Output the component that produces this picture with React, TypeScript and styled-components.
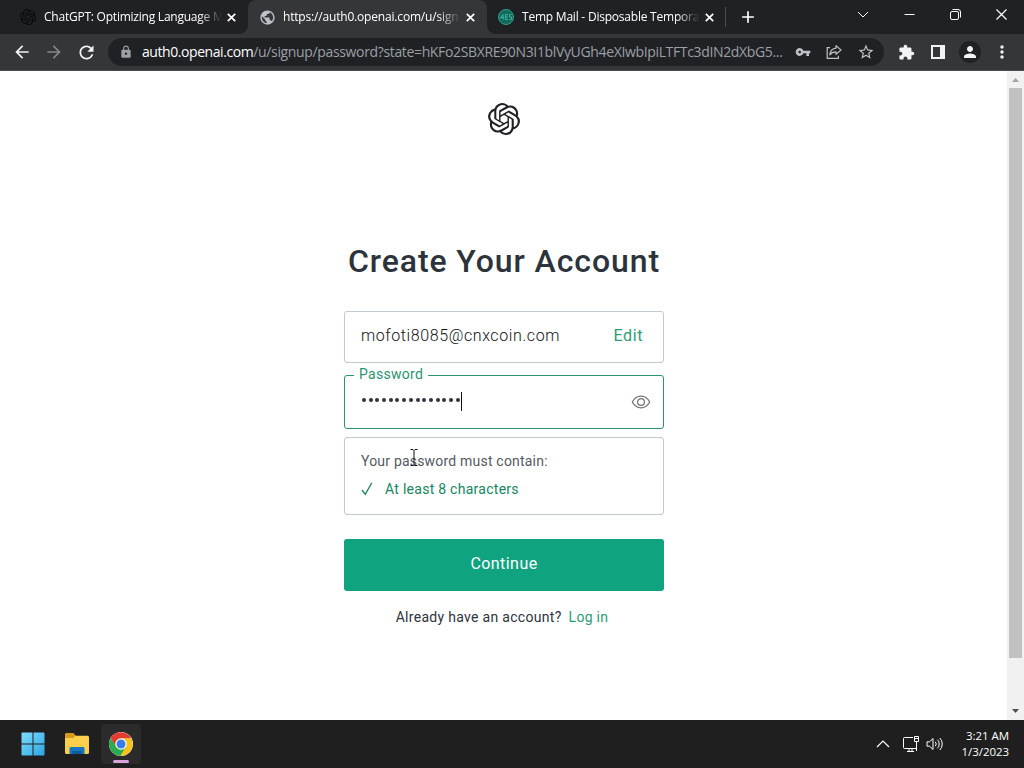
import type { ReactNode } from "react";
import { styled, createGlobalStyle, css } from "styled-components";
import { SiOpenai } from "react-icons/si";
import {
  MdAdd,
  MdArrowBack,
  MdArrowForward,
  MdExtension,
  MdLock,
  MdMoreVert,
  MdPerson,
  MdPublic,
  MdRefresh,
  MdStarBorder,
  MdVpnKey,
} from "react-icons/md";

const GlobalStyle = createGlobalStyle`
  * { box-sizing: border-box; }
  body { margin: 0; overflow: hidden; }
  svg { display: block; flex: none; }
`;

const Screen = styled.div`
  width: 1024px;
  height: 768px;
  display: flex;
  flex-direction: column;
  overflow: hidden;
  background: #fff;
  font-family: "Open Sans", "Noto Sans", sans-serif;
`;

/* browser */
const TabStrip = styled.header`
  height: 34px;
  padding-left: 9px;
  display: flex;
  background: #202124;
`;

const TabBox = styled.div<{ $active?: boolean }>`
  width: 239px;
  height: 34px;
  padding: 0 9px 0 11px;
  display: flex;
  align-items: center;
  color: #fff;
  position: relative;
  ${props => props.$active && css`
    background: #35363a;
    border-radius: 8px 8px 0 0;
    &::before, &::after {
      content: "";
      position: absolute;
      bottom: 0;
      width: 8px;
      height: 8px;
    }
    &::before {
      left: -8px;
      background: radial-gradient(circle at 0 0, transparent 7.5px, #35363a 8px);
    }
    &::after {
      right: -8px;
      background: radial-gradient(circle at 100% 0, transparent 7.5px, #35363a 8px);
    }
  `}
`;

const TabIcon = styled.div`
  width: 16px;
  height: 16px;
  display: flex;
  align-items: center;
  justify-content: center;
`;

const TabTitle = styled.div<{ $spacing: number }>`
  width: 178px;
  margin: 0 5px 0 8px;
  white-space: nowrap;
  font-size: 12px;
  line-height: 20px;
  letter-spacing: ${props => props.$spacing}px;
  mask-image: linear-gradient(to right, #000 155px, transparent 178px);
`;

const MailBadge = styled.div`
  width: 16px;
  height: 16px;
  display: flex;
  align-items: center;
  justify-content: center;
  border: 1px solid #35a08d;
  border-radius: 50%;
  background: #12695d;
  color: #48b5a2;
`;

const NewTab = styled.div`
  height: 34px;
  padding-left: 12px;
  display: flex;
  align-items: center;
  color: #fff;
  &::before {
    content: "";
    width: 1px;
    height: 20px;
    margin: 0 12px 0 -13px;
    background: #4d4e52;
  }
`;

const WindowButtons = styled.div`
  margin-left: auto;
  height: 29px;
  display: flex;
  align-items: center;
`;

const WindowButton = styled.div`
  width: 46px;
  display: flex;
  justify-content: center;
`;

const Toolbar = styled.div`
  height: 37px;
  display: flex;
  align-items: center;
  background: #35363a;
  border-bottom: 1px solid #4e4b4c;
  color: #f1f3f4;
`;

const NavButton = styled.div<{ $dim?: boolean }>`
  width: 32px;
  display: flex;
  align-items: center;
  justify-content: center;
  color: ${props => props.$dim ? "#85868a" : "#f1f3f4"};
`;

const NavGroup = styled.div`
  padding: 0 6px;
  display: flex;
  align-items: center;
`;

const Omnibox = styled.div`
  width: 776px;
  height: 28px;
  padding: 0 9px 0 11px;
  display: flex;
  align-items: center;
  border-radius: 14px;
  background: #202124;
  color: #bdc1c6;
`;

const Url = styled.div`
  width: 645px;
  margin: 0 7px 0 9px;
  flex: none;
  white-space: nowrap;
  font-size: 14px;
  line-height: 24px;
  letter-spacing: -0.35px;
  color: #9aa0a6;
  b {
    font-weight: 400;
    letter-spacing: -0.43px;
    color: #fff;
  }
`;

const OmniIcons = styled.div`
  display: flex;
  align-items: center;
  gap: 15px;
  padding-left: 1px;
`;

const Avatar = styled.div`
  width: 22px;
  height: 22px;
  display: flex;
  align-items: center;
  justify-content: center;
  border-radius: 50%;
  background: #202124;
`;

/* page */
const Viewport = styled.div`
  height: 649px;
  display: flex;
  background: #fff;
`;

const Page = styled.main`
  flex: 1;
  padding-left: 1px;
  display: flex;
  flex-direction: column;
  align-items: center;
  font-family: Roboto, sans-serif;
`;

const Logo = styled.div`
  margin-top: 32px;
  color: #202123;
`;

const Title = styled.h1`
  margin: 108px 0 0;
  height: 42px;
  white-space: nowrap;
  font-size: 32px;
  font-weight: 500;
  line-height: 36px;
  letter-spacing: 0.9px;
  color: #2d333a;
`;

const Form = styled.form`
  width: 320px;
  margin-top: 26px;
  display: flex;
  flex-direction: column;
`;

const Field = styled.div<{ $focused?: boolean }>`
  position: relative;
  height: ${props => props.$focused ? 54 : 52}px;
  margin-bottom: ${props => props.$focused ? 8 : 12}px;
  padding: 0 12px 0 16px;
  display: flex;
  align-items: center;
  border: 1px solid ${props => props.$focused ? "#2a9371" : "#c2c8d0"};
  border-radius: 3px;
  font-size: 16px;
  color: #2d333a;
`;

const Email = styled.span`
  padding-bottom: 3px;
  font-weight: 300;
  letter-spacing: 0.6px;
  color: #111;
`;

const Edit = styled.a`
  margin: 0 8px 3px auto;
  color: #2b9c77;
  letter-spacing: 0.6px;
`;

const FloatingLabel = styled.label`
  position: absolute;
  top: -12px;
  left: 9px;
  padding: 0 5px;
  background: #fff;
  font-size: 14px;
  line-height: 20px;
  letter-spacing: 0.28px;
  color: #2a9371;
`;

const Dots = styled.div`
  display: flex;
  gap: 2.7px;
  margin: 0 0 4px 1px;
  i {
    width: 4px;
    height: 4px;
    border-radius: 50%;
    background: #2d333a;
  }
`;

const Caret = styled.span`
  width: 1px;
  height: 19px;
  margin: 0 0 1px 1px;
  background: #111;
`;

const EyeButton = styled.div`
  margin: 0 0 1px auto;
`;

const Rules = styled.div`
  position: relative;
  height: 78px;
  padding: 13px 16px;
  border: 1px solid #c2c8d0;
  border-radius: 3px;
  font-size: 14px;
  line-height: 20px;
  letter-spacing: 0.2px;
  color: #55595f;
`;

const Rule = styled.div`
  margin-top: 8px;
  display: flex;
  align-items: center;
  gap: 12px;
  letter-spacing: 0.27px;
  color: #14865f;
`;

const Pointer = styled.svg`
  position: absolute;
  left: 65px;
  top: 11px;
`;

const Continue = styled.button`
  height: 52px;
  margin-top: 24px;
  padding: 0 0 3px;
  border: 0;
  border-radius: 3px;
  background: #10a37f;
  color: #fff;
  font: 400 16px Roboto, sans-serif;
  letter-spacing: 0.45px;
`;

const Footer = styled.p`
  margin: 16px 0 0;
  padding-right: 4px;
  display: flex;
  justify-content: center;
  gap: 7px;
  font-size: 14px;
  line-height: 20px;
  letter-spacing: 0.3px;
  color: #2d333a;
  a {
    color: #2b9c77;
  }
`;

const Scrollbar = styled.div`
  width: 17px;
  display: flex;
  flex-direction: column;
  align-items: center;
  background: #f1f1f1;
`;

const ScrollArrow = styled.div<{ $down?: boolean }>`
  width: 17px;
  height: 17px;
  display: flex;
  align-items: center;
  justify-content: center;
  color: ${props => props.$down ? "#505050" : "#a3a3a3"};
  transform: ${props => props.$down ? "rotate(180deg)" : "none"};
`;

const Thumb = styled.div`
  width: 13px;
  height: 570px;
  margin-bottom: auto;
  background: #c1c1c1;
`;

/* taskbar */
const Taskbar = styled.footer`
  height: 48px;
  padding: 0 15px 0 13px;
  display: flex;
  align-items: center;
  justify-content: space-between;
  background: #1f1f1f;
  color: #fff;
`;

const Apps = styled.div`
  display: flex;
  gap: 4px;
`;

const AppSlot = styled.div<{ $running?: boolean }>`
  position: relative;
  width: 40px;
  height: 40px;
  display: flex;
  align-items: center;
  justify-content: center;
  border-radius: 4px;
  background: ${props => props.$running ? "#2b2b2b" : "transparent"};
  ${props => props.$running && css`
    &::after {
      content: "";
      position: absolute;
      bottom: 1px;
      left: 12px;
      width: 16px;
      height: 3px;
      border-radius: 2px;
      background: #d9a3dc;
    }
  `}
`;

const Tray = styled.div`
  display: flex;
  align-items: center;
`;

const TrayIcons = styled.div`
  display: flex;
  align-items: center;
  gap: 7px;
  padding-left: 13px;
`;

const Clock = styled.div`
  width: 65px;
  text-align: right;
  white-space: nowrap;
  font-size: 11.5px;
  line-height: 16px;
  letter-spacing: -0.05px;
`;

function Tab({ icon, title, active, spacing }: { icon: ReactNode, title: string, active?: boolean, spacing: number }) {
  return (
    <TabBox $active={active}>
      <TabIcon>{icon}</TabIcon>
      <TabTitle $spacing={spacing}>{title}</TabTitle>
      <svg width="9" height="9" viewBox="0 0 9 9" fill="none" stroke="currentColor" strokeWidth="1.7"><path d="m.8.8 7.400 7.400M8.200.8.800 8.200" /></svg>
    </TabBox>
  )
}

function ShareIcon() {
  return (
    <svg width="16" height="16" viewBox="0 0 16 16" fill="none" stroke="currentColor" strokeWidth="1.2">
      <path d="M4 3.700H1.200v10.600h11.200v-2.600" />
      <path d="M10 1.600 15 6l-5 4.400V7.900c-3 0-4.700.8-6.200 2.900.5-3.700 2.500-6.200 6.200-6.600z" strokeLinejoin="round" />
    </svg>
  )
}

function EyeIcon() {
  return (
    <svg width="20" height="16" viewBox="0 0 20 16" fill="none" stroke="#6b6f76" strokeWidth="1.2">
      <path d="M1.300 8C3.300 4.300 6.300 2.200 10 2.200S16.700 4.300 18.700 8C16.700 11.700 13.700 13.800 10 13.800S3.300 11.700 1.300 8z" />
      <circle cx="10" cy="8" r="3.400" />
    </svg>
  )
}

function WindowsLogo() {
  return (
    <svg width="24" height="24" viewBox="0 0 24 24">
      <defs>
        <linearGradient id="win" x1="0" y1="0" x2="1" y2="1">
          <stop offset="0" stopColor="#7fdcfb" />
          <stop offset="1" stopColor="#2ba6e4" />
        </linearGradient>
      </defs>
      <path fill="url(#win)" d="M.5 1.500a1 1 0 0 1 1-1h10v11H.5zM12.500.5h10a1 1 0 0 1 1 1v10h-11zM.5 12.500h11v11h-10a1 1 0 0 1-1-1zM12.500 12.500h11v10a1 1 0 0 1-1 1h-10z" />
    </svg>
  )
}

function FolderIcon() {
  return (
    <svg width="26" height="24" viewBox="0 0 26 24">
      <path fill="#d99a1c" d="M1 2.500C1 1.700 1.600 1 2.500 1h6.200c.5 0 .9.200 1.200.600L12 4v5H1z" />
      <path fill="#fbcf4b" d="M1 6h8.200l2.300-2.300H23.500c.9 0 1.500.600 1.500 1.500V20.500c0 .9-.6 1.500-1.500 1.500h-21C1.600 22 1 21.400 1 20.500z" />
      <path fill="#1576c4" d="M5.500 22v-5.500c0-1 .6-1.600 1.600-1.600h11.800c1 0 1.600.6 1.600 1.600V22z" />
      <path fill="#0f5a9e" d="M8.500 19h9v3h-9z" />
    </svg>
  )
}

function ChromeLogo() {
  return (
    <svg width="24" height="24" viewBox="0 0 48 48">
      <circle cx="24" cy="24" r="24" fill="#fff" />
      <path fill="#e33b2e" d="M24 13h20.800A24 24 0 0 0 3.200 12l10.400 18z" />
      <path fill="#fbc116" d="M33.500 29.500 23.100 48A24 24 0 0 0 44.800 13H24z" />
      <path fill="#2da94f" d="M14.500 29.500 3.200 12A24 24 0 0 0 23.100 48l10.400-18.500z" />
      <circle cx="24" cy="24" r="11.500" fill="#fff" />
      <circle cx="24" cy="24" r="9" fill="#3a7be8" />
    </svg>
  )
}

function MailIcon() {
  return (
    <MailBadge>
      <svg width="12" height="8" viewBox="0 0 12 8" fill="none" stroke="currentColor" strokeWidth=".9">
        <path d="M.5 5.500 3 1.500v5M.5 4.500h3.500M8 1.500H5.500v5H8M5.500 4H8M11.500 1.500H9.500V4h2v2.500h-2" />
      </svg>
    </MailBadge>
  )
}

export default function App() {
  return (
    <Screen>
      <GlobalStyle />
      <TabStrip>
        <Tab icon={<SiOpenai size={16} color="#08090a" />} title="ChatGPT: Optimizing Language M" spacing={-0.23} />
        <Tab active icon={<MdPublic size={17} color="#bdc1c6" />} title="https://auth0.openai.com/u/sign" spacing={-0.18} />
        <Tab icon={<MailIcon />} title="Temp Mail - Disposable Tempora" spacing={-0.22} />
        <NewTab>
          <MdAdd size={20} />
        </NewTab>
        <WindowButtons>
          <WindowButton>
            <svg width="12" height="12" viewBox="0 0 12 12" fill="none" stroke="#fff"><path d="m1 3 5 5 5-5" /></svg>
          </WindowButton>
          <WindowButton>
            <svg width="11" height="11" viewBox="0 0 11 11" fill="none" stroke="#fff"><path d="M.5 5.500h10" /></svg>
          </WindowButton>
          <WindowButton>
            <svg width="11" height="11" viewBox="0 0 11 11" fill="none" stroke="#fff">
              <rect x=".5" y="2.500" width="8" height="8" rx="1.500" />
              <path d="M2.500.5H8a2.500 2.500 0 0 1 2.500 2.500v5.500" />
            </svg>
          </WindowButton>
          <WindowButton>
            <svg width="11" height="11" viewBox="0 0 11 11" fill="none" stroke="#fff" strokeWidth="1.200"><path d="m.5.5 10 10M10.500.5l-10 10" /></svg>
          </WindowButton>
        </WindowButtons>
      </TabStrip>

      <Toolbar>
        <NavGroup>
          <NavButton><MdArrowBack size={20} /></NavButton>
          <NavButton $dim><MdArrowForward size={20} /></NavButton>
          <NavButton><MdRefresh size={21} /></NavButton>
        </NavGroup>
        <Omnibox>
          <MdLock size={14} color="#9aa0a6" />
          <Url><b>auth0.openai.com</b>/u/signup/password?state=hKFo2SBXRE90N3I1blVyUGh4eXIwbIpiLTFTc3dIN2dXbG5...</Url>
          <OmniIcons>
            <MdVpnKey size={16} />
            <ShareIcon />
            <MdStarBorder size={18} />
          </OmniIcons>
        </Omnibox>
        <NavGroup>
          <NavButton><MdExtension size={17} /></NavButton>
          <NavButton>
            <svg width="14" height="14" viewBox="0 0 14 14" fill="none" stroke="currentColor" strokeWidth="2">
              <path d="M1 1h12v12H1z" />
              <path d="M9 1h4v12H9z" fill="currentColor" stroke="none" />
            </svg>
          </NavButton>
          <NavButton><Avatar><MdPerson size={18} /></Avatar></NavButton>
          <NavButton><MdMoreVert size={20} /></NavButton>
        </NavGroup>
      </Toolbar>

      <Viewport>
        <Page>
          <Logo><SiOpenai size={32} /></Logo>
          <Title>Create Your Account</Title>
          <Form>
            <Field>
              <Email>mofoti8085@cnxcoin.com</Email>
              <Edit>Edit</Edit>
            </Field>
            <Field $focused>
              <FloatingLabel>Password</FloatingLabel>
              <Dots>
                {Array.from({ length: 15 }, (_, i) => <i key={i} />)}
              </Dots>
              <Caret />
              <EyeButton><EyeIcon /></EyeButton>
            </Field>
            <Rules>
              Your password must contain:
              <Rule>
                <svg width="12" height="14" viewBox="0 0 12 14" fill="none" stroke="currentColor" strokeWidth="1.300"><path d="M1 8l3.300 4.300L10.800.8" /></svg>
                At least 8 characters
              </Rule>
              <Pointer width="8" height="17" viewBox="0 0 8 17" fill="none" stroke="#111">
                <path d="M.5.500h2.500l1 1 1-1h2.500M4 1.500v14M.5 16.500h2.500l1-1 1 1h2.500" />
              </Pointer>
            </Rules>
            <Continue type="button">Continue</Continue>
            <Footer>Already have an account? <a>Log in</a></Footer>
          </Form>
        </Page>
        <Scrollbar>
          <ScrollArrow>
            <svg width="7" height="4" viewBox="0 0 7 4" fill="currentColor"><path d="M3.500 0 7 4H0z" /></svg>
          </ScrollArrow>
          <Thumb />
          <ScrollArrow $down>
            <svg width="7" height="4" viewBox="0 0 7 4" fill="currentColor"><path d="M3.500 0 7 4H0z" /></svg>
          </ScrollArrow>
        </Scrollbar>
      </Viewport>

      <Taskbar>
        <Apps>
          <AppSlot><WindowsLogo /></AppSlot>
          <AppSlot><FolderIcon /></AppSlot>
          <AppSlot $running><ChromeLogo /></AppSlot>
        </Apps>
        <Tray>
          <svg width="14" height="8" viewBox="0 0 14 8" fill="none" stroke="#fff" strokeWidth="1.200"><path d="m1 7 6-6 6 6" /></svg>
          <TrayIcons>
            <svg width="16" height="16" viewBox="0 0 16 16" fill="none" stroke="#fff">
              <path d="M10 1.500H1.500a1 1 0 0 0-1 1v9a1 1 0 0 0 1 1h12M4 15.500h7M6 12.500v3M9 12.500v3" />
              <path d="M11.500.5h4v5h-4zM13.500 5.500V15M11.500 2.500h4" />
            </svg>
            <svg width="18" height="14" viewBox="0 0 18 14" fill="none" stroke="#fff">
              <path d="M1 4.800h2.500L7 1.500v11L3.500 9.200H1z" strokeLinejoin="round" />
              <path d="M9.300 4.800a3.300 3.300 0 0 1 0 4.400M11.500 2.800a6 6 0 0 1 0 8.400M13.800 1a8.600 8.600 0 0 1 0 12" />
            </svg>
          </TrayIcons>
          <Clock>3:21 AM<br />1/3/2023</Clock>
        </Tray>
      </Taskbar>
    </Screen>
  )
}
